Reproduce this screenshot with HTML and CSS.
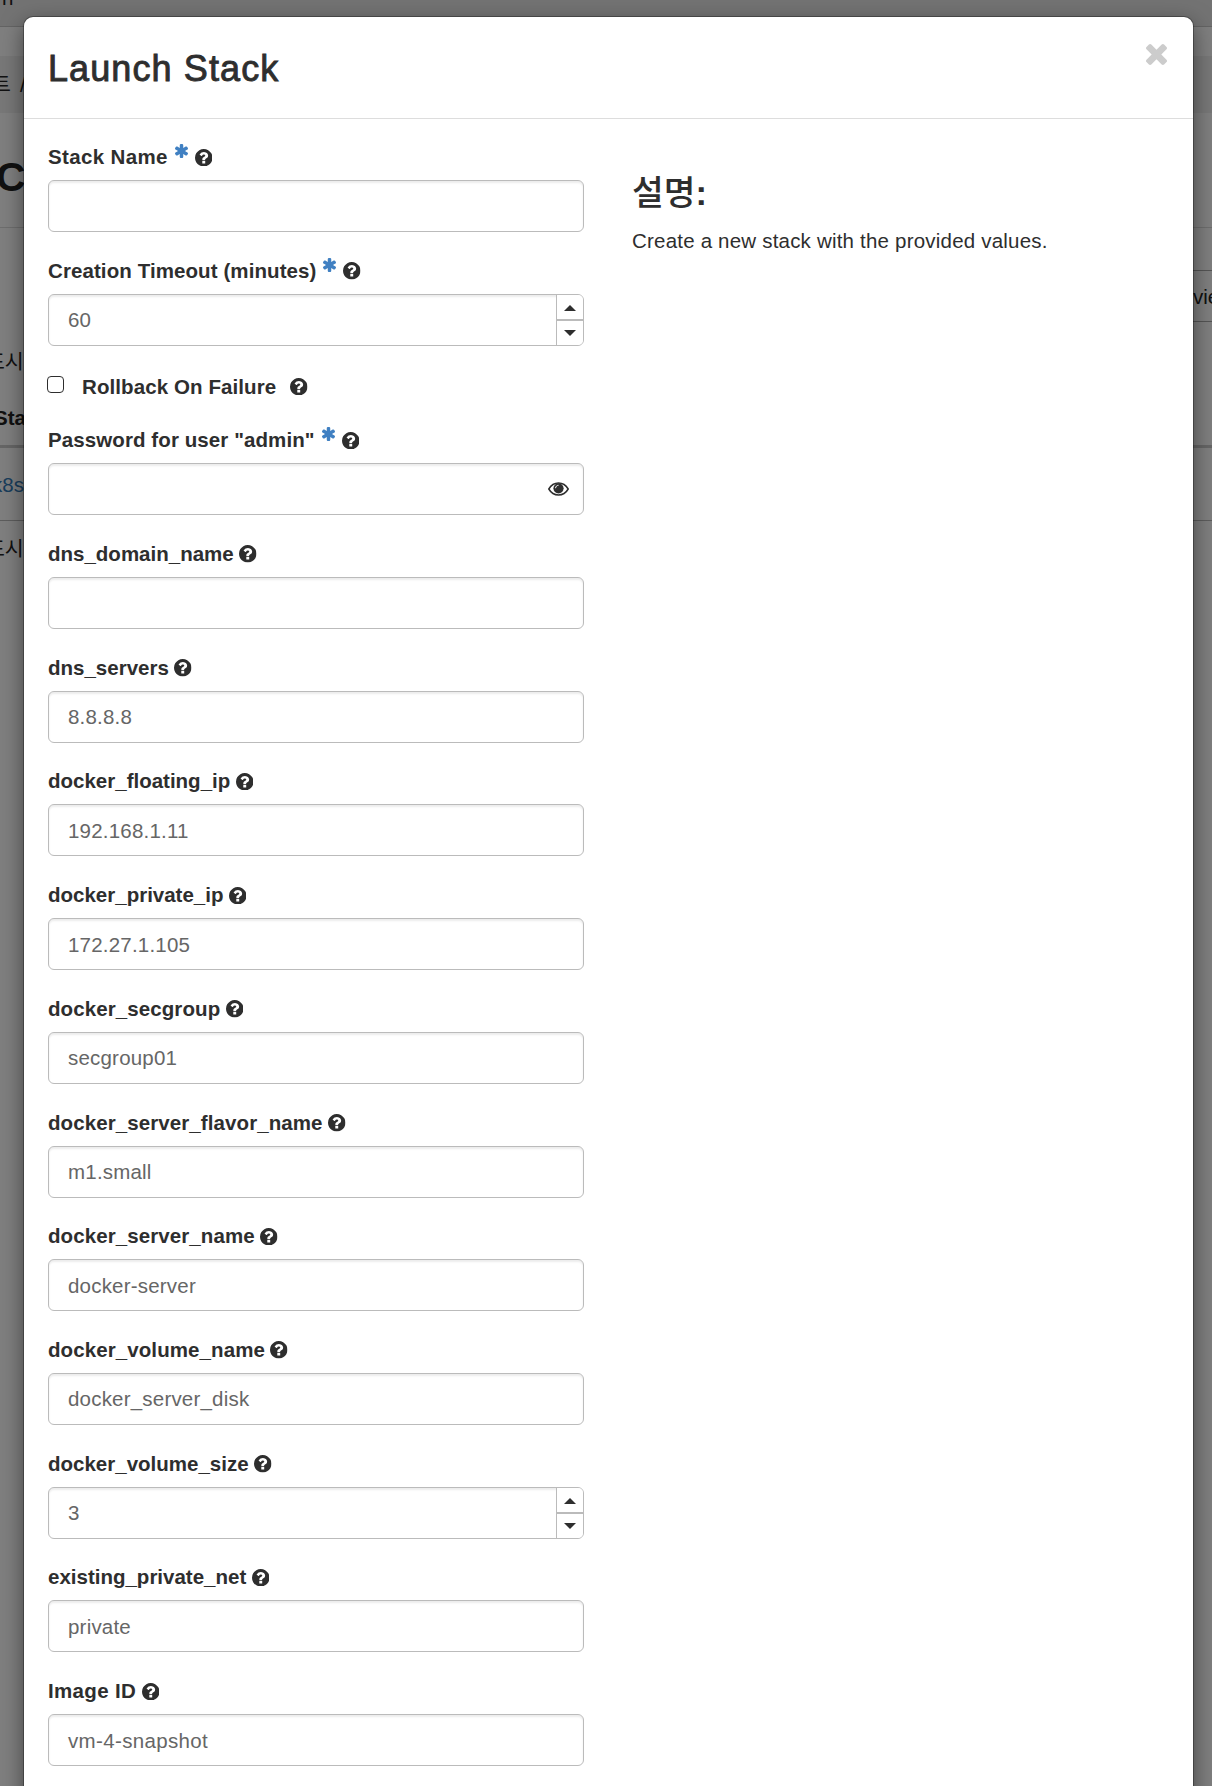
FILE: index.html
```html
<!DOCTYPE html>
<html lang="ko">
<head>
<meta charset="utf-8">
<title>Launch Stack</title>
<link rel="stylesheet" href="styles.css">
</head>
<body>
<svg class="sprite" aria-hidden="true">
<symbol id="help" viewBox="128 128 1536 1536"><path d="M1024 1376v-192q0-14-9-23t-23-9H800q-14 0-23 9t-9 23v192q0 14 9 23t23 9h192q14 0 23-9t9-23zm256-672q0-88-55.500-163T1086 425t-170-41q-243 0-371 213-15 24 8 42l132 100q7 6 19 6 16 0 25-12 53-68 86-92 34-24 86-24 48 0 85.500 26t37.500 59q0 38-20 61t-68 45q-63 28-115.500 86.500T768 1020v36q0 14 9 23t23 9h192q14 0 23-9t9-23q0-19 21.500-49.500T1100 957q32-18 49-28.500t46-35 44.500-48 28-60.500 12.500-81zm384 192q0 209-103 385.500T1281.500 1561 896 1664t-385.500-103T231 1281.500 128 896t103-385.500T510.500 231 896 128t385.500 103T1561 510.500 1664 896z"/></symbol>
<symbol id="star" viewBox="180 128 1432 1536"><path d="M1546 1050q46 26 59.500 77.500T1593 1225l-64 110q-26 46-77.500 59.500T1354 1382l-266-153v307q0 52-38 90t-90 38H832q-52 0-90-38t-38-90v-307l-266 153q-46 26-97.500 12.500T263 1335l-64-110q-26-46-12.500-97.500T246 1050l266-154-266-154q-46-26-59.500-77.500T199 567l64-110q26-46 77.500-59.500T438 410l266 153V256q0-52 38-90t90-38h128q52 0 90 38t38 90v307l266-153q46-26 97.500-12.500T1529 457l64 110q26 46 12.500 97.500T1546 742l-266 154z"/></symbol>
</svg>
<div class="page">
<div class="topbar"><span class="crumb-tail">n</span></div>
<div class="crumbs"><span>트</span><span>/</span></div>
<div class="heading">C</div>
<div class="toolbar"><span class="view">view</span></div>
<div class="count">표시</div>
<div class="thead">Sta</div>
<div class="trow">k8s</div>
<div class="count foot">표시</div>
</div>
<div class="backdrop"></div>
<div class="modal">
<header class="modal-header">
<h1>Launch Stack</h1>
<svg class="close" viewBox="302 366 1188 1188"><path d="M1490 1322q0 40-28 68l-136 136q-28 28-68 28t-68-28l-294-294-294 294q-28 28-68 28t-68-28l-136-136q-28-28-28-68t28-68l294-294-294-294q-28-28-28-68t28-68l136-136q28-28 68-28t68 28l294 294 294-294q28-28 68-28t68 28l136 136q28 28 28 68t-28 68l-294 294 294 294q28 28 28 68z"/></svg>
</header>
<div class="modal-body">
<form class="form">
<div class="field"><div class="label wide"><span>Stack Name</span><svg class="req"><use href="#star"/></svg><svg class="help"><use href="#help"/></svg></div><div class="input"></div></div>
<div class="field"><div class="label mid"><span>Creation Timeout (minutes)</span><svg class="req"><use href="#star"/></svg><svg class="help"><use href="#help"/></svg></div><div class="input num"><span>60</span><div class="spin"><i class="up"></i><i class="down"></i></div></div></div>
<div class="check"><span class="box"></span><span class="check-text mid">Rollback On Failure</span><svg class="help"><use href="#help"/></svg></div>
<div class="field"><div class="label mid"><span>Password for user "admin"</span><svg class="req"><use href="#star"/></svg><svg class="help"><use href="#help"/></svg></div><div class="input pass"><svg class="eye" viewBox="0 0 21 14"><path d="M.8 7C3 3.200 6.500 1 10.500 1s7.500 2.200 9.700 6c-2.200 3.800-5.700 6-9.700 6S3 10.800.8 7z" fill="none" stroke="#2e2e2e" stroke-width="1.500"/><circle cx="10.500" cy="6.300" r="5.100" fill="#2e2e2e"/><path d="M7.600 6.200c0-1.700 1.200-2.900 2.900-2.900" fill="none" stroke="#fff" stroke-width="1"/></svg></div></div>
<div class="field"><div class="label"><span>dns_domain_name</span><svg class="help"><use href="#help"/></svg></div><div class="input"></div></div>
<div class="field"><div class="label"><span>dns_servers</span><svg class="help"><use href="#help"/></svg></div><div class="input"><span>8.8.8.8</span></div></div>
<div class="field"><div class="label"><span>docker_floating_ip</span><svg class="help"><use href="#help"/></svg></div><div class="input"><span>192.168.1.11</span></div></div>
<div class="field"><div class="label"><span>docker_private_ip</span><svg class="help"><use href="#help"/></svg></div><div class="input"><span>172.27.1.105</span></div></div>
<div class="field"><div class="label mid"><span>docker_secgroup</span><svg class="help"><use href="#help"/></svg></div><div class="input"><span>secgroup01</span></div></div>
<div class="field"><div class="label mid"><span>docker_server_flavor_name</span><svg class="help"><use href="#help"/></svg></div><div class="input"><span>m1.small</span></div></div>
<div class="field"><div class="label mid"><span>docker_server_name</span><svg class="help"><use href="#help"/></svg></div><div class="input"><span>docker-server</span></div></div>
<div class="field"><div class="label mid"><span>docker_volume_name</span><svg class="help"><use href="#help"/></svg></div><div class="input"><span>docker_server_disk</span></div></div>
<div class="field"><div class="label"><span>docker_volume_size</span><svg class="help"><use href="#help"/></svg></div><div class="input num"><span>3</span><div class="spin"><i class="up"></i><i class="down"></i></div></div></div>
<div class="field"><div class="label"><span>existing_private_net</span><svg class="help"><use href="#help"/></svg></div><div class="input"><span>private</span></div></div>
<div class="field"><div class="label wide"><span>Image ID</span><svg class="help"><use href="#help"/></svg></div><div class="input"><span class="wide">vm-4-snapshot</span></div></div>
</form>
<section class="about">
<h2>설명<b>:</b></h2>
<p>Create a new stack with the provided values.</p>
</section>
</div>
</div>
</body>
</html>
```
FILE: styles.css
```css
* { box-sizing: border-box; }
body {
  margin: 0;
  height: 1786px;
  position: relative;
  overflow: hidden;
  background: #fff;
  color: #2e2e2e;
  font-family: "Liberation Sans", "Noto Sans CJK KR", sans-serif;
  font-size: 20.5px;
  line-height: 29px;
}
.sprite { position: absolute; width: 0; height: 0; }

/* page behind the dialog */
.page { display: flow-root; height: 1786px; color: #222; }
.topbar { display: flow-root; height: 27px; background: #e6e6e6; border-bottom: 1px solid #c8c8c8; }
.crumb-tail { display: block; margin-top: -17px; height: 43px; padding-left: 2px; }
.crumbs { height: 86px; padding-top: 43px; background: linear-gradient(#fff 0, #fff 29px, #f0f0f0 29px); display: flex; gap: 9px; margin-left: -8px; }
.heading { height: 115px; padding-top: 44px; font-size: 41px; line-height: 41px; font-weight: bold; margin-left: -4px; border-bottom: 1px solid #ddd; }
.toolbar { margin: 42px 0 0; height: 52px; display: flex; justify-content: flex-end; }
.view { width: 80px; padding: 11px 0 0 41px; margin-right: -20px; border-top: 1px solid #aaa; border-bottom: 1px solid #aaa; }
.count { height: 77px; padding-top: 25px; margin-left: -14px; white-space: nowrap; }
.thead { height: 49px; margin-left: -8px; padding: 4px 0 0 2px; font-weight: bold; border-bottom: 3px solid #ccc; }
.trow { height: 73px; margin-left: -8px; padding-top: 22px; color: #337ab7; border-bottom: 1px solid #bbb; }
.foot { padding-top: 13px; }
.backdrop { position: absolute; inset: 0; background: rgba(0, 0, 0, .5); }

/* dialog */
.modal {
  position: absolute;
  top: 17px;
  left: 24px;
  width: 1169px;
  height: 1800px;
  background: #fff;
  border-radius: 9px;
  box-shadow: 0 0 0 1px rgba(0, 0, 0, .3), 0 7px 22px rgba(0, 0, 0, .5);
}
.modal-header {
  height: 102px;
  padding: 27px 26px 0 24px;
  display: flex;
  justify-content: space-between;
  border-bottom: 1px solid #ddd;
}
h1 { margin: 1px 0 0; font-size: 36px; line-height: 48px; font-weight: normal; letter-spacing: 1.1px; -webkit-text-stroke: .9px #2e2e2e; }
.close { width: 21px; height: 21px; fill: #ccc; }
.modal-body { display: flex; padding: 22px 24px 0; }
.form { width: 536px; }
.field { height: 113.73px; }
.label { height: 39px; padding-top: 1px; display: flex; align-items: flex-start; font-weight: bold; }
.help { width: 17.5px; height: 17.5px; margin: 6.5px 0 0 5.5px; fill: #2e2e2e; }
.req { width: 13px; height: 14px; margin: 2px 1.5px 0 7px; fill: #4080c2; }
.input {
  height: 52px;
  padding-left: 19px;
  display: flex;
  align-items: center;
  justify-content: space-between;
  color: #666;
  letter-spacing: .2px;
  border: 1px solid #bbb;
  border-radius: 6px;
  box-shadow: inset 0 2px 2px rgba(0, 0, 0, .075);
}
.wide { letter-spacing: .35px; }
.mid { letter-spacing: .09px; }
.pass { padding-right: 14px; }
.eye { width: 21px; height: 14px; margin-left: auto; }
.spin { width: 27px; height: 50px; border-left: 1px solid #bbb; background: linear-gradient(#fff 24px, #bbb 24px, #bbb 26px, #fff 26px); border-radius: 0 5px 5px 0; display: flex; flex-direction: column; align-items: center; padding-top: 10px; gap: 19px; }
.spin i { border: 6px solid transparent; width: 0; height: 0; }
.spin .up { border-top: 0; border-bottom: 6px solid #2e2e2e; }
.spin .down { border-bottom: 0; border-top: 6px solid #2e2e2e; }
.check { height: 55.8px; display: flex; font-weight: bold; padding-top: 4px; }
.box { width: 17px; height: 17px; border: 1px solid #2e2e2e; border-radius: 4px; margin: 4px 0 0 -1px; }
.check-text { margin-left: 18px; }
.check .help { margin: 5.5px 0 0 14px; }
.about { margin-left: 48px; padding-top: 30px; }
h2 { margin: 0 0 11px; font-size: 34.5px; line-height: 44px; font-weight: 500; }
p { margin: 0; letter-spacing: .2px; }
```
